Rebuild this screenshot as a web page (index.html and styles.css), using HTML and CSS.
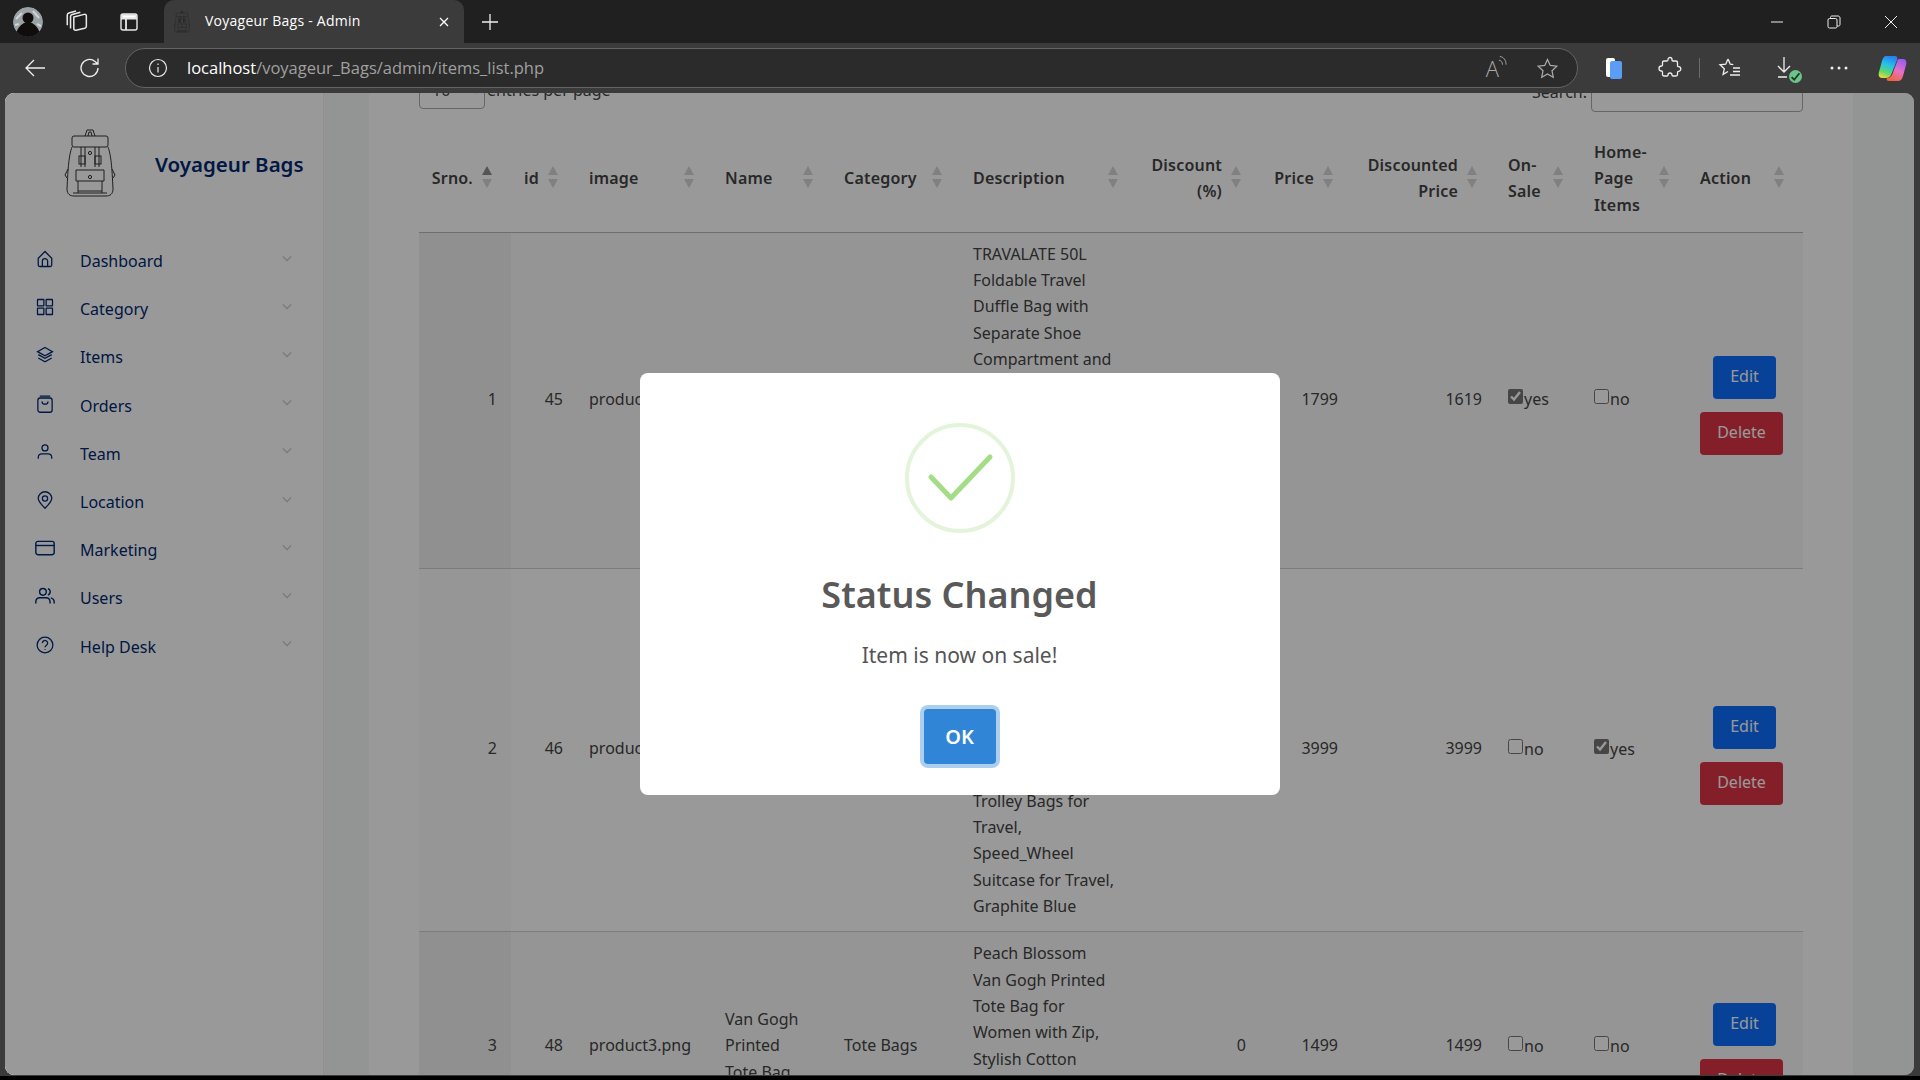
FILE: index.html
```html
<!DOCTYPE html>
<html lang="en">
<head>
  <meta charset="UTF-8" />
  <title>Voyageur Bags - Admin</title>
  <link rel="stylesheet" href="styles.css">
</head>
<body>

  <svg class="defs" aria-hidden="true">
    <defs>
      <symbol id="backpack" viewBox="0 0 50 74">
        <path d="M20 9l2-6h6l2 6M23 9l1-4h2l1 4" />
        <rect x="7" y="9" width="36" height="11" rx="2" />
        <path d="M7 20C4 28 3 40 2 62c0 5 3 7 7 7h32c4 0 7-2 7-7-1-22-2-34-5-42" />
        <path d="M16 20v20M20 20v20M30 20v20M34 20v20" />
        <rect x="14" y="29" width="6" height="8" />
        <rect x="30" y="29" width="6" height="8" />
        <circle cx="25" cy="26" r="1.6" />
        <path d="M11 43h28v11H11zM13 54v12M37 54v12M13 64h24" />
        <circle cx="25" cy="50" r="1.6" />
        <path d="M3 42l-3 6 2 3M47 42l3 6-2 3M8 66h34" />
      </symbol>
    </defs>
  </svg>

  <header class="tabstrip">
    <div class="avatar">
      <svg viewBox="0 0 30 30"><circle cx="15" cy="15" r="15" fill="#9aa2a6"/><path d="M3 12l6-6M20 4l6 7M24 17l4 2M2 18l4-1" stroke="#cfd4d6" stroke-width="2"/><circle cx="15" cy="11" r="5.500" fill="#120d0d"/><path d="M3 30c0-9 5-12 8-14h8c3 2 8 5 8 14z" fill="#120d0d"/></svg>
    </div>
    <span class="strip-icon">
      <svg viewBox="0 0 22 21"><path d="M9 6.500l9.500-2.500c1.200-.3 2 .3 2 1.500v9.500c0 1-.5 1.500-1.500 1.800L11 18.500c-1.200.3-2-.3-2-1.500z"/><path d="M6 17V6c0-1 .5-1.500 1.500-1.800L15 2"/><path d="M3 14V4.500C3 3.500 3.500 3 4.500 2.700L11 1"/></svg>
    </span>
    <span class="strip-icon">
      <svg viewBox="0 0 24 24"><rect x="4" y="4" width="16" height="16" rx="2"/><path d="M4 8.500h16M9 8.500V20" stroke-width="1.800"/><path d="M5 5h14v3H5z" fill="#fff"/></svg>
    </span>
    <div class="tab">
      <svg class="tab-fav"><use href="#backpack"/></svg>
      <span class="tab-title">Voyageur Bags - Admin</span>
      <svg class="tab-close" viewBox="0 0 12 12"><path d="M2 2l8 8M10 2l-8 8"/></svg>
    </div>
    <svg class="new-tab" viewBox="0 0 18 18"><path d="M9 1v16M1 9h16"/></svg>
    <div class="win-controls">
      <svg viewBox="0 0 14 14"><path d="M1 7h12"/></svg>
      <svg viewBox="0 0 14 14"><rect x="1" y="3.500" width="9" height="9.500" rx="1.500"/><path d="M3.500 3.500V2.500C3.500 1.500 4 1 5 1h6c1.200 0 2 .8 2 2v6.500c0 1-.5 1.500-1.500 1.500H10"/></svg>
      <svg viewBox="0 0 14 14"><path d="M1 1l12 12M13 1L1 13"/></svg>
    </div>
  </header>

  <div class="toolbar">
    <svg class="tool-btn back" viewBox="0 0 24 24"><path d="M22 12H3M11 4l-8 8 8 8"/></svg>
    <svg class="tool-btn reload" viewBox="0 0 24 24"><path d="M20 12a8.500 8.500 0 1 1-3-6.500L20 8M20 2.500V8h-5.500"/></svg>
    <div class="address">
      <svg class="addr-info" viewBox="0 0 20 20"><circle cx="10" cy="10" r="8.500"/><path d="M10 9v5.500M10 5.500v1.500"/></svg>
      <span class="url"><span class="url-host">localhost</span>/voyageur_Bags/admin/items_list.php</span>
      <span class="addr-read">A<svg viewBox="0 0 10 14"><path d="M1 5c2 0 4 2 4 5M2 1c4 0 7 4 7 9"/></svg></span>
      <svg class="addr-star" viewBox="0 0 24 24"><path d="M12 2.500l2.900 6.300 6.800.8-5 4.700 1.300 6.800-6-3.400-6 3.400 1.300-6.800-5-4.700 6.800-.8z"/></svg>
    </div>
    <div class="tool-right">
      <svg class="tr-coll" viewBox="0 0 18 22"><rect x="1" y="1" width="9" height="19" rx="2" fill="#fff"/><rect x="5" y="4" width="12" height="18" rx="2" fill="#5b9cf5"/></svg>
      <svg class="tr-ext" viewBox="0 0 24 24"><path d="M10 3.500a2 2 0 0 1 4 0c0 1 0 1.500 1 1.500h3c1 0 1.500.5 1.500 1.500v3c0 1 .5 1.200 1 1.200a2.300 2.300 0 0 1 0 4.600c-.5 0-1 .2-1 1.200v2c0 1-.5 1.500-1.500 1.500h-3c-1 0-1-.5-1-1a2 2 0 0 0-4 0c0 .5 0 1-1 1H6c-1 0-1.500-.5-1.500-1.500v-2.500c0-1-.5-1-1-1a2.500 2.500 0 0 1 0-5c.5 0 1 0 1-1v-3C4.500 5.500 5 5 6 5h3c1 0 1-.5 1-1.500z"/></svg>
      <span class="tr-divider"></span>
      <svg class="tr-fav" viewBox="0 0 24 24"><path d="M10 3l2.300 5.200 3 .4M10 3L7.700 8.200l-5.700.6 4.300 3.900-1.200 5.700L10 15.500M15 12h7M15 15.500h7M12 19h10"/></svg>
      <span class="tr-dl">
        <svg viewBox="0 0 24 24"><path d="M11 2v15M5 11l6 6 6-6M5 22h9"/></svg>
        <span class="dl-badge"><svg viewBox="0 0 10 10"><path d="M2 5.500l2 2 4-5"/></svg></span>
      </span>
      <svg class="tr-more" viewBox="0 0 18 4"><circle cx="2" cy="2" r="1.500"/><circle cx="9" cy="2" r="1.500"/><circle cx="16" cy="2" r="1.500"/></svg>
      <svg class="tr-copilot" viewBox="0 0 29 27">
        <defs>
          <linearGradient id="cpA" x1="0.6" y1="0" x2="0.3" y2="1"><stop offset="0" stop-color="#2a7ff0"/><stop offset=".4" stop-color="#25c3e8"/><stop offset=".75" stop-color="#5fd86a"/><stop offset="1" stop-color="#e9d83c"/></linearGradient>
          <linearGradient id="cpB" x1="0.7" y1="0" x2="0.3" y2="1"><stop offset="0" stop-color="#9a5cf0"/><stop offset=".5" stop-color="#e86fc8"/><stop offset="1" stop-color="#f2643a"/></linearGradient>
        </defs>
        <path d="M8 1H17C19 1 20 3 19 5L13 20C12 22 10 23 8 23H4C1 23 0 20 1 17L4 6C5 3 6 1 8 1z" fill="url(#cpA)"/>
        <path d="M21 4H25C28 4 29 7 28 10L25 21C24 25 22 26 20 26H11C9 26 8 25 9 23C11 23 13 22 14 20L19 7C19.500 5 20 4 21 4z" fill="url(#cpB)"/>
      </svg>
    </div>
  </div>

  <div class="page">
    <aside class="sidebar">
      <div class="brand">
        <svg class="brand-logo"><use href="#backpack"/></svg>
        <span class="brand-name">Voyageur Bags</span>
      </div>
      <nav class="side-nav">
        <a class="nav-item">
          <svg class="nav-icon" viewBox="0 0 24 24"><path d="M3 11l9-9 9 9v9a2 2 0 0 1-2 2H5a2 2 0 0 1-2-2zM8.500 22v-7a3.500 3.500 0 0 1 7 0v7"/></svg>
          <span class="nav-label">Dashboard</span>
          <svg class="nav-caret" viewBox="0 0 12 8"><path d="M1 1.500l5 5 5-5"/></svg>
        </a>
        <a class="nav-item">
          <svg class="nav-icon" viewBox="0 0 24 24"><rect x="2" y="2" width="8.500" height="8.500" rx=".5"/><rect x="13.500" y="2" width="8.500" height="8.500" rx=".5"/><rect x="2" y="13.500" width="8.500" height="8.500" rx=".5"/><rect x="13.500" y="13.500" width="8.500" height="8.500" rx=".5"/></svg>
          <span class="nav-label">Category</span>
          <svg class="nav-caret" viewBox="0 0 12 8"><path d="M1 1.500l5 5 5-5"/></svg>
        </a>
        <a class="nav-item">
          <svg class="nav-icon" viewBox="0 0 24 24"><path d="M12 2l10 5.500L12 13 2 7.500zM3 11.500l9 5 9-5M3 16l9 5 9-5"/></svg>
          <span class="nav-label">Items</span>
          <svg class="nav-caret" viewBox="0 0 12 8"><path d="M1 1.500l5 5 5-5"/></svg>
        </a>
        <a class="nav-item">
          <svg class="nav-icon" viewBox="0 0 24 24"><rect x="2.500" y="4" width="19" height="19" rx="3"/><path d="M5 1.500h14M8 8.500c0 5 8 5 8 0"/></svg>
          <span class="nav-label">Orders</span>
          <svg class="nav-caret" viewBox="0 0 12 8"><path d="M1 1.500l5 5 5-5"/></svg>
        </a>
        <a class="nav-item">
          <svg class="nav-icon" viewBox="0 0 24 24"><circle cx="12" cy="6.500" r="4"/><path d="M3 21v-1.500c0-3 2-5 5-5h8c3 0 5 2 5 5V21"/></svg>
          <span class="nav-label">Team</span>
          <svg class="nav-caret" viewBox="0 0 12 8"><path d="M1 1.500l5 5 5-5"/></svg>
        </a>
        <a class="nav-item">
          <svg class="nav-icon" viewBox="0 0 24 24"><path d="M12 23C7 18 3 14 3 10a9 9 0 0 1 18 0c0 4-4 8-9 13z"/><circle cx="12" cy="10" r="3.500"/></svg>
          <span class="nav-label">Location</span>
          <svg class="nav-caret" viewBox="0 0 12 8"><path d="M1 1.500l5 5 5-5"/></svg>
        </a>
        <a class="nav-item">
          <svg class="nav-icon wide" viewBox="0 0 24 24"><rect x="1" y="4" width="22" height="16" rx="2.500"/><path d="M1 9h22"/></svg>
          <span class="nav-label">Marketing</span>
          <svg class="nav-caret" viewBox="0 0 12 8"><path d="M1 1.500l5 5 5-5"/></svg>
        </a>
        <a class="nav-item">
          <svg class="nav-icon wide" viewBox="0 0 24 24"><circle cx="9.500" cy="7" r="4"/><path d="M1 21v-2c0-3 2-5 5-5h7c3 0 5 2 5 5v2M15.500 3.200a4 4 0 0 1 0 7.600M19 14.200c2.500.6 4 2.500 4 5V21"/></svg>
          <span class="nav-label">Users</span>
          <svg class="nav-caret" viewBox="0 0 12 8"><path d="M1 1.500l5 5 5-5"/></svg>
        </a>
        <a class="nav-item">
          <svg class="nav-icon" viewBox="0 0 24 24"><circle cx="12" cy="12" r="10.500"/><path d="M8.500 9.500A3.500 3.500 0 1 1 14 12.300c-1.200.8-2 1.400-2 2.700M12 17.500v1.200"/></svg>
          <span class="nav-label">Help Desk</span>
          <svg class="nav-caret" viewBox="0 0 12 8"><path d="M1 1.500l5 5 5-5"/></svg>
        </a>
      </nav>
    </aside>

    <main class="main">
      <section class="card">
        <div class="dt-top">
          <div class="dt-length">
            <select class="dt-select"><option>10</option></select>
            <span>entries per page</span>
          </div>
          <div class="dt-search">
            <span>Search:</span>
            <input class="dt-input" type="text">
          </div>
        </div>

        <table class="items">
          <colgroup>
            <col class="c-srno"><col class="c-id"><col class="c-image"><col class="c-name"><col class="c-cat"><col class="c-desc">
            <col class="c-disc"><col class="c-price"><col class="c-dprice"><col class="c-sale"><col class="c-home"><col class="c-action">
          </colgroup>
          <thead>
            <tr>
              <th class="num sorted">Srno.</th>
              <th class="num">id</th>
              <th>image</th>
              <th>Name</th>
              <th>Category</th>
              <th>Description</th>
              <th class="num">Discount (%)</th>
              <th class="num">Price</th>
              <th class="num">Discounted Price</th>
              <th>On-Sale</th>
              <th>Home-Page Items</th>
              <th>Action</th>
            </tr>
          </thead>
          <tbody>
            <tr class="odd">
              <td class="num first">1</td>
              <td class="num">45</td>
              <td>product1.png</td>
              <td>Travalate Duffle Bag</td>
              <td>Duffle Bags</td>
              <td>TRAVALATE 50L<br>Foldable Travel<br>Duffle Bag with<br>Separate Shoe<br>Compartment and<br>Wet Pocket,<br>Lightweight<br>Weekender<br>Luggage for<br>Men and<br>Women,<br>Black</td>
              <td class="num">10</td>
              <td class="num">1799</td>
              <td class="num">1619</td>
              <td><label class="chk"><input type="checkbox" checked>yes</label></td>
              <td><label class="chk"><input type="checkbox">no</label></td>
              <td>
                <div class="actions">
                  <button class="btn btn-edit">Edit</button>
                  <button class="btn btn-delete">Delete</button>
                </div>
              </td>
            </tr>
            <tr>
              <td class="num first">2</td>
              <td class="num">46</td>
              <td>product2.png</td>
              <td>Speed Wheel Trolley</td>
              <td>Trolley Bags</td>
              <td>Safari Speed<br>Wheel 65 cm<br>Medium Size<br>Polycarbonate<br>Hard Sided<br>8 Wheel<br>Luggage,<br>Check-in<br>Trolley Bags for<br>Travel,<br>Speed_Wheel<br>Suitcase for Travel,<br>Graphite Blue</td>
              <td class="num">0</td>
              <td class="num">3999</td>
              <td class="num">3999</td>
              <td><label class="chk"><input type="checkbox">no</label></td>
              <td><label class="chk"><input type="checkbox" checked>yes</label></td>
              <td>
                <div class="actions">
                  <button class="btn btn-edit">Edit</button>
                  <button class="btn btn-delete">Delete</button>
                </div>
              </td>
            </tr>
            <tr class="odd">
              <td class="num first">3</td>
              <td class="num">48</td>
              <td>product3.png</td>
              <td>Van Gogh<br>Printed<br>Tote Bag</td>
              <td>Tote Bags</td>
              <td>Peach Blossom<br>Van Gogh Printed<br>Tote Bag for<br>Women with Zip,<br>Stylish Cotton<br>Canvas Shoulder<br>Bag for College<br>and Work</td>
              <td class="num">0</td>
              <td class="num">1499</td>
              <td class="num">1499</td>
              <td><label class="chk"><input type="checkbox">no</label></td>
              <td><label class="chk"><input type="checkbox">no</label></td>
              <td>
                <div class="actions">
                  <button class="btn btn-edit">Edit</button>
                  <button class="btn btn-delete">Delete</button>
                </div>
              </td>
            </tr>
          </tbody>
        </table>
      </section>
    </main>

    <div class="overlay">
      <div class="modal">
        <div class="modal-icon">
          <svg viewBox="0 0 110 110"><path d="M26 54l20 21 39-41"/></svg>
        </div>
        <h2 class="modal-title">Status Changed</h2>
        <p class="modal-text">Item is now on sale!</p>
        <button class="modal-ok">OK</button>
      </div>
    </div>
  </div>

  <div class="bottom-edge"></div>

</body>
</html>
```

FILE: styles.css
```css
* {
  box-sizing: border-box;
}

html,
body {
  margin: 0;
  height: 100%;
  overflow: hidden;
}

body {
  width: 1920px;
  height: 1080px;
  display: flex;
  flex-direction: column;
  background: #3b3b3b;
  font-family: "Noto Sans", "Liberation Sans", sans-serif;
  font-size: 16px;
  color: #444;
}

.defs {
  width: 0;
  height: 0;
  position: absolute;
}

symbol path,
symbol rect,
symbol circle {
  fill: none;
  stroke: currentColor;
  stroke-width: 1;
}

/* browser chrome */

.tabstrip {
  height: 43px;
  flex: none;
  display: flex;
  align-items: center;
  background: #202020;
  padding-left: 13px;
}

.avatar {
  width: 30px;
  height: 30px;
  border-radius: 50%;
  overflow: hidden;
  margin-right: 21px;
}

.avatar svg {
  display: block;
}

.strip-icon {
  width: 24px;
  height: 24px;
  margin-right: 29px;
}

.strip-icon svg {
  fill: none;
  stroke: #e8e8e8;
  stroke-width: 1.4;
}

.tab {
  width: 300px;
  height: 43px;
  margin-left: -6px;
  display: flex;
  align-items: center;
  background: #3b3b3b;
  border-radius: 10px 10px 0 0;
  padding: 0 14px 0 10px;
}

.tab-fav {
  width: 16px;
  height: 24px;
  color: #1c1c1c;
  margin-right: 15px;
}

.tab-title {
  font-family: "Open Sans", sans-serif;
  font-size: 14px;
  letter-spacing: 0.25px;
  margin-top: -2px;
  color: #fff;
  flex: 1;
  white-space: nowrap;
}

.tab-close {
  width: 12px;
  height: 12px;
  fill: none;
  stroke: #fff;
  stroke-width: 1.3;
}

.new-tab {
  width: 18px;
  height: 18px;
  margin-left: 17px;
  fill: none;
  stroke: #eee;
  stroke-width: 1.3;
}

.win-controls {
  margin-left: auto;
  display: flex;
  gap: 43px;
  padding-right: 22px;
}

.win-controls svg {
  width: 14px;
  height: 14px;
  fill: none;
  stroke: #eee;
  stroke-width: 1;
}

.toolbar {
  height: 50px;
  flex: none;
  display: flex;
  align-items: center;
  background: #3b3b3b;
}

.tool-btn {
  width: 24px;
  height: 24px;
  fill: none;
  stroke: #eee;
  stroke-width: 1.3;
}

.back {
  margin-left: 23px;
}

.reload {
  margin-left: 31px;
}

.address {
  width: 1453px;
  height: 40px;
  margin-left: 23px;
  display: flex;
  align-items: center;
  background: #2b2b2b;
  border: 1px solid #646464;
  border-radius: 20px;
  padding: 0 18px 0 22px;
}

.addr-info {
  width: 20px;
  height: 20px;
  fill: none;
  stroke: #e8e8e8;
  stroke-width: 1.2;
}

.url {
  margin-left: 19px;
  margin-top: -2px;
  font-family: "Open Sans", sans-serif;
  font-size: 16.5px;
  color: #a0a0a0;
}

.url-host {
  color: #fff;
}

.addr-read {
  margin-left: auto;
  display: flex;
  align-items: flex-start;
  font-family: "Open Sans", sans-serif;
  font-size: 22px;
  line-height: 24px;
  font-weight: 300;
  color: #aaa;
}

.addr-read svg {
  width: 9px;
  height: 14px;
  margin: -1px 0 0 -1px;
  fill: none;
  stroke: #aaa;
  stroke-width: 1;
}

.addr-star {
  width: 23px;
  height: 23px;
  margin-left: 29px;
  fill: none;
  stroke: #aaa;
  stroke-width: 1.3;
}

.tool-right {
  flex: 1;
  display: flex;
  align-items: center;
  padding-left: 27px;
}

.tr-coll {
  width: 18px;
  height: 22px;
}

.tr-ext {
  width: 24px;
  height: 24px;
  margin-left: 35px;
  fill: none;
  stroke: #eee;
  stroke-width: 1.3;
}

.tr-divider {
  width: 1px;
  height: 20px;
  margin-left: 17px;
  background: #6a6a6a;
}

.tr-fav {
  width: 24px;
  height: 24px;
  margin-left: 18px;
  fill: none;
  stroke: #eee;
  stroke-width: 1.3;
}

.tr-dl {
  position: relative;
  width: 24px;
  height: 26px;
  margin-left: 31px;
}

.tr-dl > svg {
  width: 24px;
  height: 24px;
  fill: none;
  stroke: #eee;
  stroke-width: 1.3;
}

.dl-badge {
  position: absolute;
  right: -5px;
  bottom: -2px;
  width: 13px;
  height: 13px;
  border-radius: 50%;
  background: #6cc48a;
  display: flex;
}

.dl-badge svg {
  fill: none;
  stroke: #1d3b28;
  stroke-width: 1.4;
}

.tr-more {
  width: 18px;
  height: 4px;
  margin-left: 33px;
  fill: #eee;
}

.tr-copilot {
  width: 29px;
  height: 27px;
  margin-left: 30px;
}

/* page */

.page {
  position: relative;
  height: 982px;
  flex: none;
  margin: 0 6px 0 5px;
  display: flex;
  overflow: hidden;
  border-radius: 9px;
  background: #f6f7f7;
}

.bottom-edge {
  flex: 1;
  margin-top: 1px;
  background: #000;
}

.sidebar {
  width: 319px;
  flex: none;
  background: #fff;
  border-right: 1px solid #eee;
  color: #012970;
}

.brand {
  display: flex;
  align-items: center;
  height: 73px;
  margin-top: 34px;
  padding-left: 59px;
}

.brand-logo {
  width: 52px;
  height: 74px;
  color: #333;
}

.brand-name {
  margin-left: 39px;
  font-size: 20.5px;
  font-weight: 600;
  white-space: nowrap;
}

.side-nav {
  margin-top: 37px;
}

.nav-item {
  display: flex;
  align-items: center;
  height: 48.2px;
  padding-left: 31px;
}

.nav-icon {
  width: 18px;
  height: 18px;
  margin: -4px 0 0;
  flex: none;
  fill: none;
  stroke: #012970;
  stroke-width: 1.7;
}

.nav-icon.wide {
  width: 20px;
  height: 20px;
  margin-left: -1px;
  margin-right: -1px;
}

.nav-label {
  margin-left: 26px;
  flex: 1;
}

.nav-caret {
  width: 10px;
  height: 7px;
  margin: -6px 31px 0 0;
  fill: none;
  stroke: #c6c6c6;
  stroke-width: 1.5;
}

.main {
  flex: 1;
  min-width: 0;
  padding: 0 61px 0 45px;
}

.card {
  background: #fff;
  height: 110%;
  padding: 0 50px;
}

.dt-top {
  display: flex;
  justify-content: space-between;
  margin-top: -22px;
  margin-bottom: 17px;
}

.dt-length,
.dt-search {
  display: flex;
  align-items: center;
  gap: 2px;
  height: 38px;
}

.dt-search {
  margin-top: 3px;
  gap: 4px;
}

.dt-search span {
  margin-top: -2px;
}

.dt-select {
  width: 66px;
  height: 38px;
  font: inherit;
  color: inherit;
  background: #fff;
  border: 1px solid #aaa;
  border-radius: 4px;
  padding-left: 8px;
}

.dt-input {
  width: 212px;
  height: 38px;
  background: #fff;
  border: 1px solid #aaa;
  border-radius: 4px;
}

/* table */

.items {
  width: 1384px;
  table-layout: fixed;
  border-collapse: collapse;
  line-height: 26.3px;
}

.c-srno { width: 92px; }
.c-id { width: 66px; }
.c-image { width: 136px; }
.c-name { width: 119px; }
.c-cat { width: 129px; }
.c-desc { width: 176px; }
.c-disc { width: 123px; }
.c-price { width: 92px; }
.c-dprice { width: 144px; }
.c-sale { width: 86px; }
.c-home { width: 106px; }
.c-action { width: 115px; }

.items th {
  position: relative;
  padding: 10px 38px 14px 12px;
  text-align: left;
  font-weight: 600;
  letter-spacing: 0.2px;
  border-bottom: 1px solid #b8b8b8;
}

.items th.num {
  text-align: right;
}

.items th::before,
.items th::after {
  content: "";
  position: absolute;
  right: 19px;
  border-left: 5px solid transparent;
  border-right: 5px solid transparent;
  opacity: 0.16;
}

.items th::before {
  top: 37px;
  border-bottom: 9px solid #000;
}

.items th::after {
  top: 50px;
  border-top: 9px solid #000;
}

.items th.sorted::before {
  opacity: 0.45;
}

.items td {
  padding: 8px 12px 12px;
  vertical-align: middle;
  border-bottom: 1px solid #cfcfcf;
}

.items td.num {
  text-align: right;
  padding-right: 14px;
}

.odd td {
  background: #f9f9f9;
}

.items td.first {
  background: #fafafa;
}

.odd td.first {
  background: #f1f1f1;
}

.chk {
  display: inline-flex;
  align-items: center;
}

.chk input {
  width: 15px;
  height: 15px;
  margin: -6px 1px 0 0;
  accent-color: #757575;
}

.actions {
  display: flex;
  flex-direction: column;
  align-items: flex-start;
  gap: 13px;
  padding-top: 14px;
}

.btn {
  font: inherit;
  line-height: 24px;
  color: #fff;
  border: none;
  border-radius: 4px;
  padding: 8px 0 11px;
}

.btn-edit {
  width: 63px;
  margin-left: 13px;
  background: #0d6efd;
}

.btn-delete {
  width: 83px;
  background: #dc3545;
}

/* alert */

.overlay {
  position: absolute;
  inset: 0;
  display: flex;
  align-items: center;
  justify-content: center;
  background: rgba(0, 0, 0, 0.4);
}

.modal {
  width: 640px;
  height: 422px;
  padding-top: 50px;
  display: flex;
  flex-direction: column;
  align-items: center;
  background: #fff;
  border-radius: 8px;
}

.modal-icon {
  width: 110px;
  height: 110px;
  border: 4px solid rgba(165, 220, 134, 0.3);
  border-radius: 50%;
}

.modal-icon svg {
  display: block;
  margin: -4px;
  width: 110px;
  height: 110px;
  fill: none;
  stroke: #a5dc86;
  stroke-width: 5;
  stroke-linecap: round;
  stroke-linejoin: round;
}

.modal-title {
  margin: 42px 0 0;
  font-size: 36px;
  line-height: 40px;
  font-weight: 600;
  color: #595959;
}

.modal-text {
  margin: 26px 0 0;
  font-size: 21px;
  line-height: 28px;
  color: #545454;
}

.modal-ok {
  width: 72px;
  height: 55px;
  margin-top: 40px;
  font: inherit;
  font-size: 20px;
  font-weight: 600;
  color: #fff;
  background: #3085d6;
  border: none;
  border-radius: 4px;
  box-shadow: 0 0 0 4px rgba(48, 133, 214, 0.4);
}
```
